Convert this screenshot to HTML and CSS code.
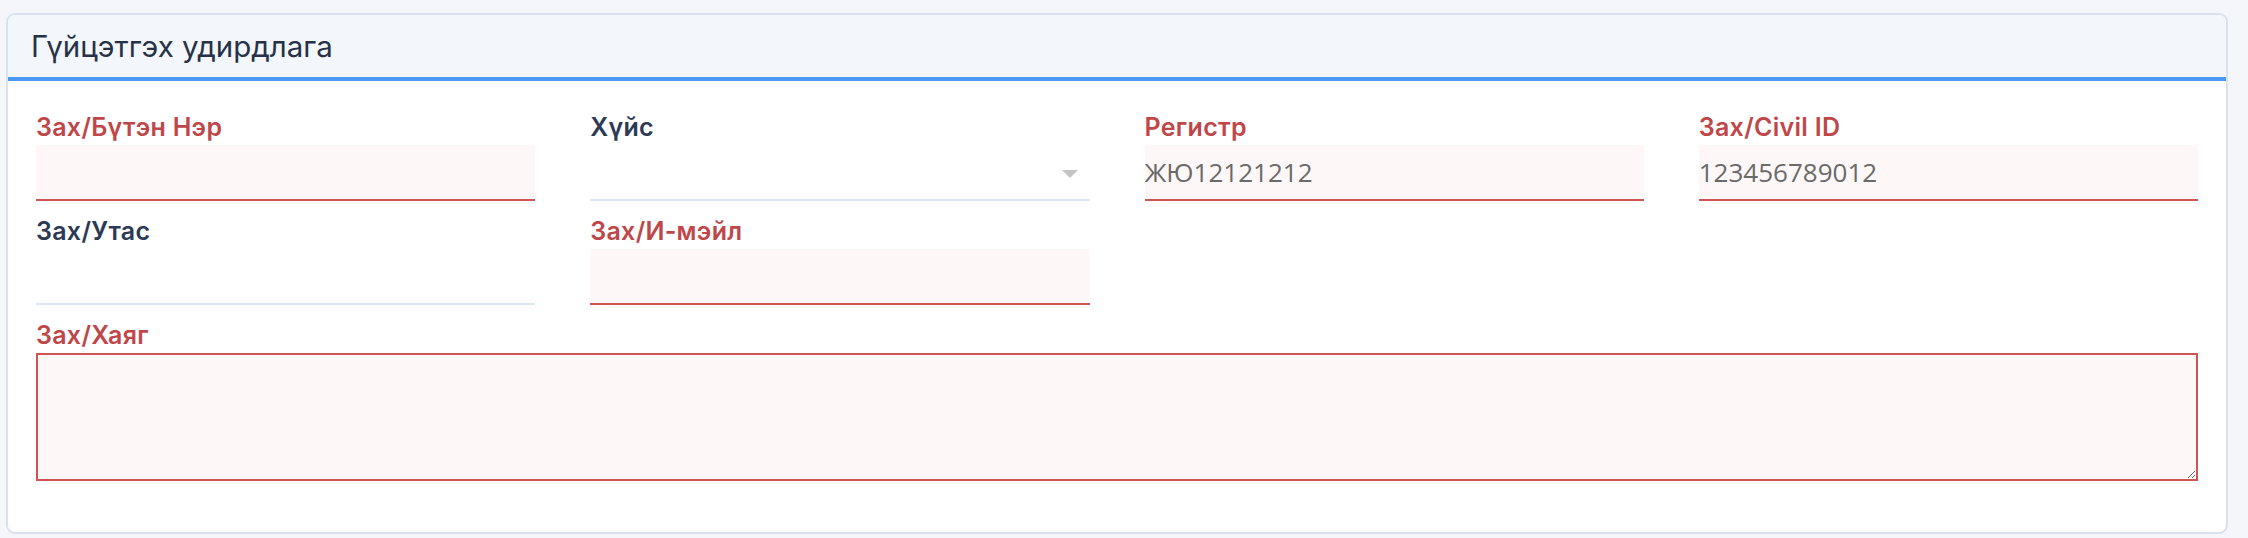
FILE: index.html
```html
<!DOCTYPE html>
<html lang="mn">
<head>
  <meta charset="UTF-8">
  <title>Гүйцэтгэх удирдлага</title>
  <meta name="viewport" content="width=device-width, initial-scale=1.0">
  <link rel="stylesheet" href="styles.css">
</head>
<body>
  <div class="card">
    <div class="card-header">Гүйцэтгэх удирдлага</div>

    <div class="card-body">
      <div class="field invalid">
        <label>Зах/Бүтэн Нэр</label>
        <input type="text" value="">
      </div>

      <div class="field">
        <label>Хүйс</label>
        <div class="select">
          <span class="arrow"></span>
        </div>
      </div>

      <div class="field invalid">
        <label>Регистр</label>
        <input type="text" value="ЖЮ12121212">
      </div>

      <div class="field invalid">
        <label>Зах/Civil ID</label>
        <input type="text" value="123456789012">
      </div>

      <div class="field">
        <label>Зах/Утас</label>
        <input type="text" value="">
      </div>

      <div class="field invalid">
        <label>Зах/И-мэйл</label>
        <input type="text" value="">
      </div>

      <div class="field invalid wide">
        <label>Зах/Хаяг</label>
        <textarea></textarea>
      </div>
    </div>
  </div>
</body>
</html>
```

FILE: styles.css
```css
body {
  margin: 0;
  padding: 13px 20px 4px 6px;
  background-color: #f4f6fb;
  font-family: Inter, "Noto Sans", sans-serif;
}
.card {
  background-color: #fff;
  border: 2px solid #d9e1ef;
  border-radius: 9px;
  overflow: hidden;
}
.card-header {
  height: 62px;
  display: flex;
  align-items: center;
  padding: 0 23px;
  background-color: #f3f6fb;
  border-bottom: 4px solid #4a9af4;
  font-size: 29.5px;
  color: #263247;
}
.card-body {
  display: grid;
  grid-template-columns: repeat(4, 1fr);
  column-gap: 55px;
  row-gap: 15px;
  padding: 31px 28px 51px 28px;
}
.field {
  display: flex;
  flex-direction: column;
}
.field.wide {
  grid-column: 1 / -1;
}
.field label {
  font-size: 25px;
  line-height: 30px;
  font-weight: 600;
  letter-spacing: 0.3px;
  color: #2c3a55;
  margin-bottom: 3px;
}
.field.invalid label {
  color: #bf474a;
}
.field input,
.select {
  box-sizing: border-box;
  height: 56px;
  padding: 0;
  border: none;
  border-bottom: 2px solid #dbe7f7;
  background: transparent;
  font-family: "Open Sans", sans-serif;
  font-size: 26px;
  color: #6a6a6a;
  outline: none;
}
.field.invalid input {
  background-color: #fdf7f7;
  border-bottom-color: #d05454;
}
.select {
  display: flex;
  align-items: center;
  justify-content: flex-end;
  padding-right: 12px;
}
.arrow {
  width: 0;
  height: 0;
  border-left: 8px solid transparent;
  border-right: 8px solid transparent;
  border-top: 8px solid #c4c4c4;
  margin-top: 4px;
}
textarea {
  box-sizing: border-box;
  height: 128px;
  border: 2px solid #d05454;
  background-color: #fdf7f7;
  font-family: "Open Sans", sans-serif;
  font-size: 26px;
  padding: 6px 10px;
  outline: none;
}
```
